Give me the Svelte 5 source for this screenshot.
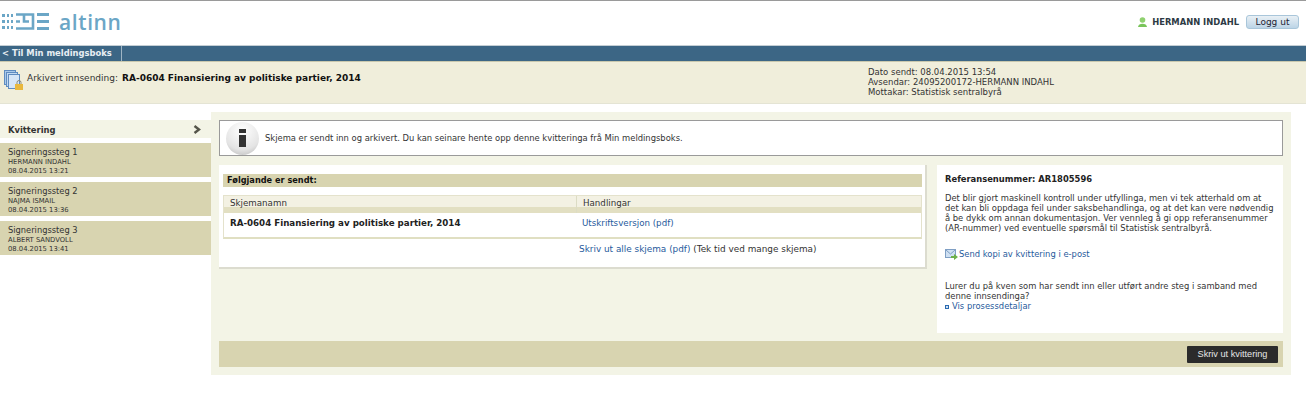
<script>
  const steps = [
    { t: 'Signeringssteg 1', n: 'HERMANN INDAHL', d: '08.04.2015 13:21' },
    { t: 'Signeringssteg 2', n: 'NAJMA ISMAIL', d: '08.04.2015 13:36' },
    { t: 'Signeringssteg 3', n: 'ALBERT SANDVOLL', d: '08.04.2015 13:41' }
  ];
</script>

<div class="page">
  <header class="top">
    <div class="logo">
      <svg width="47" height="18" viewBox="0 0 47 18" class="mark">
        <g fill="#6ba6c6">
          <rect x="0" y="1" width="3" height="3"/><rect x="5" y="1" width="2" height="3"/><rect x="9" y="1" width="2" height="3"/>
          <rect x="0" y="7" width="3" height="3"/><rect x="5" y="7" width="2" height="3"/><rect x="9" y="7" width="2" height="3"/>
          <rect x="0" y="13" width="3" height="3"/><rect x="5" y="13" width="2" height="3"/><rect x="9" y="13" width="2" height="3"/>
          <rect x="35" y="0" width="12" height="3"/><rect x="35" y="7" width="12" height="3"/><rect x="35" y="14" width="12" height="3"/>
        </g>
        <path d="M14 1.500H31V15.500H14M14 8.500H18M22 1.500V8.500H27" fill="none" stroke="#6ba6c6" stroke-width="2.600"/>
      </svg>
      <span class="word">altinn</span>
    </div>
    <div class="user">
      <svg width="9" height="10" viewBox="0 0 9 10"><circle cx="4.500" cy="3" r="2.800" fill="#8fd16f"/><path d="M0 10 C0 5.500 9 5.500 9 10Z" fill="#79c45a"/></svg>
      <b>HERMANN INDAHL</b>
      <button class="logout">Logg ut</button>
    </div>
  </header>

  <nav class="bar"><a class="back" href="#a">&lt; Til Min meldingsboks</a></nav>

  <section class="band">
    <div class="band-left">
      <svg width="20" height="21" viewBox="0 0 20 21">
        <rect x="0.500" y="0.500" width="11" height="14" fill="#a9c9ea" stroke="#5f8cc0"/>
        <rect x="2.500" y="2.500" width="11" height="14" fill="#c2daf2" stroke="#5f8cc0"/>
        <rect x="4.500" y="4.500" width="11" height="14" fill="#d6e6f7" stroke="#5f8cc0"/>
        <rect x="11" y="14" width="8" height="6" fill="#e8b83e"/>
        <path d="M13 14V12.500a2 2 0 0 1 4 0V14" fill="none" stroke="#8a8a7a"/>
      </svg>
      <span class="arch">Arkivert innsending:</span>
      <b>RA-0604 Finansiering av politiske partier, 2014</b>
    </div>
    <div class="band-right">
      <div>Dato sendt: 08.04.2015 13:54</div>
      <div>Avsendar: 24095200172-HERMANN INDAHL</div>
      <div>Mottakar: Statistisk sentralbyrå</div>
    </div>
  </section>

  <main class="body">
    <aside class="side">
      <div class="kv"><b>Kvittering</b>
        <svg width="8" height="9" viewBox="0 0 8 9"><path d="M1.500 1L6 4.500L1.500 8" fill="none" stroke="#55554a" stroke-width="2.400"/></svg>
      </div>
      {#each steps as s}
        <div class="step">
          <div class="st">{s.t}</div>
          <div class="sn">{s.n}</div>
          <div class="sn">{s.d}</div>
        </div>
      {/each}
    </aside>

    <div class="panel">
      <div class="info">
        <div class="badge"><span></span></div>
        <p>Skjema er sendt inn og arkivert. Du kan seinare hente opp denne kvitteringa frå Min meldingsboks.</p>
      </div>

      <div class="cols">
        <div class="left">
          <h3>Følgjande er sendt:</h3>
          <div class="table">
            <div class="thead">
              <div class="c1">Skjemanamn</div>
              <div class="c2">Handlingar</div>
            </div>
            <div class="trow">
              <div class="c1"><b>RA-0604 Finansiering av politiske partier, 2014</b></div>
              <div class="c2"><a href="#a">Utskriftsversjon (pdf)</a></div>
            </div>
          </div>
          <div class="printall"><a href="#a">Skriv ut alle skjema (pdf)</a> (Tek tid ved mange skjema)</div>
        </div>

        <div class="right">
          <div class="ref">Referansenummer: AR1805596</div>
          <p class="para">Det blir gjort maskinell kontroll under utfyllinga, men vi tek atterhald om at det kan bli oppdaga feil under saksbehandlinga, og at det kan vere nødvendig å be dykk om annan dokumentasjon. Ver vennleg å gi opp referansenummer (AR-nummer) ved eventuelle spørsmål til Statistisk sentralbyrå.</p>
          <div class="mail">
            <svg width="13" height="11" viewBox="0 0 13 11"><rect x="0.500" y="0.500" width="10" height="8" fill="#cfe0f2" stroke="#7f9fc4"/><path d="M1 1L5.500 5L10 1" fill="none" stroke="#7f9fc4"/><path d="M6 7h3V5l4 3-4 3V9H6z" fill="#6db04a"/></svg>
            <a href="#a">Send kopi av kvittering i e-post</a>
          </div>
          <p class="lurer">Lurer du på kven som har sendt inn eller utført andre steg i samband med denne innsendinga?</p>
          <div class="vis"><i></i><a href="#a">Vis prosessdetaljar</a></div>
        </div>
      </div>

      <div class="foot"><button class="print">Skriv ut kvittering</button></div>
    </div>
  </main>
</div>

<style>
  :global(body) { margin: 0; background: #fff; }
  .page { width: 1306px; height: 406px; overflow: hidden; font-family: "DejaVu Sans", Verdana, sans-serif; font-size: 8.400px; color: #333; line-height: 11px; }
  a { color: #1f5a9c; text-decoration: none; }
  p { margin: 0; }
  .top { height: 44px; border-top: 1px solid #9a9a9a; border-bottom: 1px solid #c4ced4; display: flex; justify-content: space-between; align-items: flex-start; }
  .logo { display: flex; align-items: center; margin: 9px 0 0 2px; gap: 10px; }
  .word { font-family: "Open Sans", sans-serif; font-size: 21px; line-height: 24px; color: #6ba6c6; letter-spacing: 0.600px; font-weight: 600; }
  .user { display: flex; align-items: center; margin: 14px 7px 0 0; gap: 5px; }
  .user b { color: #2d3a44; margin-right: 2px; }
  .logout { width: 53px; height: 14px; padding: 0; font: 9px/12px "DejaVu Sans", sans-serif; color: #223; border: 1px solid #a9c6da; border-radius: 3px; background: linear-gradient(#e9f0f5, #bcd4e6); }
  .bar { height: 15px; background: #3c6685; border-bottom: 1px solid #c9c8ae; }
  .back { display: block; width: 119px; height: 15px; line-height: 15px; padding-left: 2px; color: #e8eef3; font-weight: bold; border-right: 1px solid #9fb5c4; }
  .band { height: 41px; background: #f0eedb; border-bottom: 1px solid #e4e4d4; display: flex; box-sizing: content-box; }
  .band-left { display: flex; align-items: flex-start; width: 868px; padding: 8px 0 0 4px; box-sizing: border-box; font-size: 9px; }
  .band-left svg { margin-right: 3px; }
  .band-left .arch { margin-top: 3px; margin-right: 4px; }
  .band-left b { margin-top: 3px; color: #111; }
  .band-right { padding-top: 5px; font-size: 8.500px; }
  .band-right div { line-height: 10px; }
  .body { display: flex; align-items: flex-start; margin-top: 8px; }
  .side { width: 211px; padding-top: 8px; }
  .kv { height: 18px; background: #f3f4e6; padding: 3px 10px 0 8px; box-sizing: border-box; display: flex; justify-content: space-between; align-items: center; color: #333; margin-bottom: 5px; }
  .kv svg { margin-top: -2px; }
  .step { height: 34px; margin-bottom: 5px; background: #d8d4b0; padding: 4px 0 0 8px; box-sizing: border-box; }
  .st { line-height: 11px; font-size: 8.300px; }
  .sn { font-size: 6.800px; line-height: 8.500px; }
  .panel { width: 1080px; height: 263px; background: #f3f4e6; padding: 8px; box-sizing: border-box; }
  .info { height: 36px; box-sizing: border-box; background: #fff; border: 1px solid #9a9a9a; display: flex; align-items: center; padding-left: 6px; gap: 6px; }
  .badge { width: 33px; height: 33px; border-radius: 50%; background: radial-gradient(circle at 50% 25%, #fff, #e4e4e4 65%, #b5b5b5); display: flex; align-items: center; justify-content: center; flex-direction: column; }
  .badge span { display: block; width: 7px; height: 18px; background: linear-gradient(#333 0 4px, transparent 4px 6px, #333 6px); }
  .cols { display: flex; align-items: flex-start; gap: 10px; margin-top: 9px; }
  .left { width: 708px; height: 104px; box-sizing: border-box; background: #fff; border-right: 2px solid #dcdccf; border-bottom: 2px solid #dcdccf; padding: 9px 3px 0 4px; }
  .left h3 { margin: 0; height: 13px; font-size: 8.200px; line-height: 13px; color: #111; background: #d8d4b0; padding-left: 4px; }
  .table { margin-top: 8px; border: 1px solid #e4e2cc; border-bottom: 2px solid #e0dfc2; font-size: 8.700px; }
  .thead { display: flex; height: 17px; background: linear-gradient(#f3f1e3 0 62%, #e2dfc2 62%); }
  .thead div { line-height: 14px; padding-left: 6px; }
  .thead .c2 { border-left: 1px solid #dcdcc4; }
  .trow { display: flex; height: 24px; line-height: 20px; }
  .trow .c1 { padding-left: 6px; color: #222; }
  .c1 { width: 352px; box-sizing: border-box; }
  .c2 { flex: 1; padding-left: 6px; }
  .printall { margin: 5px 0 0 356px; font-size: 8.900px; }
  .right { width: 346px; height: 168px; box-sizing: border-box; background: #fff; padding: 9px 8px; }
  .ref { font-weight: bold; color: #222; }
  .para { margin-top: 8px; line-height: 10px; width: 332px; }
  .mail { display: flex; align-items: center; margin-top: 16px; gap: 1px; }
  .lurer { margin-top: 21px; line-height: 10px; }
  .vis { display: flex; align-items: center; }
  .vis i { width: 2px; height: 2px; background: #cfe0f2; border: 1px solid #2a6ab0; box-sizing: content-box; margin-right: 3px; }
  .foot { margin-top: 8px; height: 26px; background: #d8d4b0; display: flex; justify-content: flex-end; align-items: center; padding-right: 5px; }
  .print { width: 91px; height: 17px; padding: 0; border: 0; border-radius: 1px; background: #2b2b2b; color: #e6e6e6; font: 9.200px/17px "Liberation Sans", Arial, sans-serif; }
</style>
